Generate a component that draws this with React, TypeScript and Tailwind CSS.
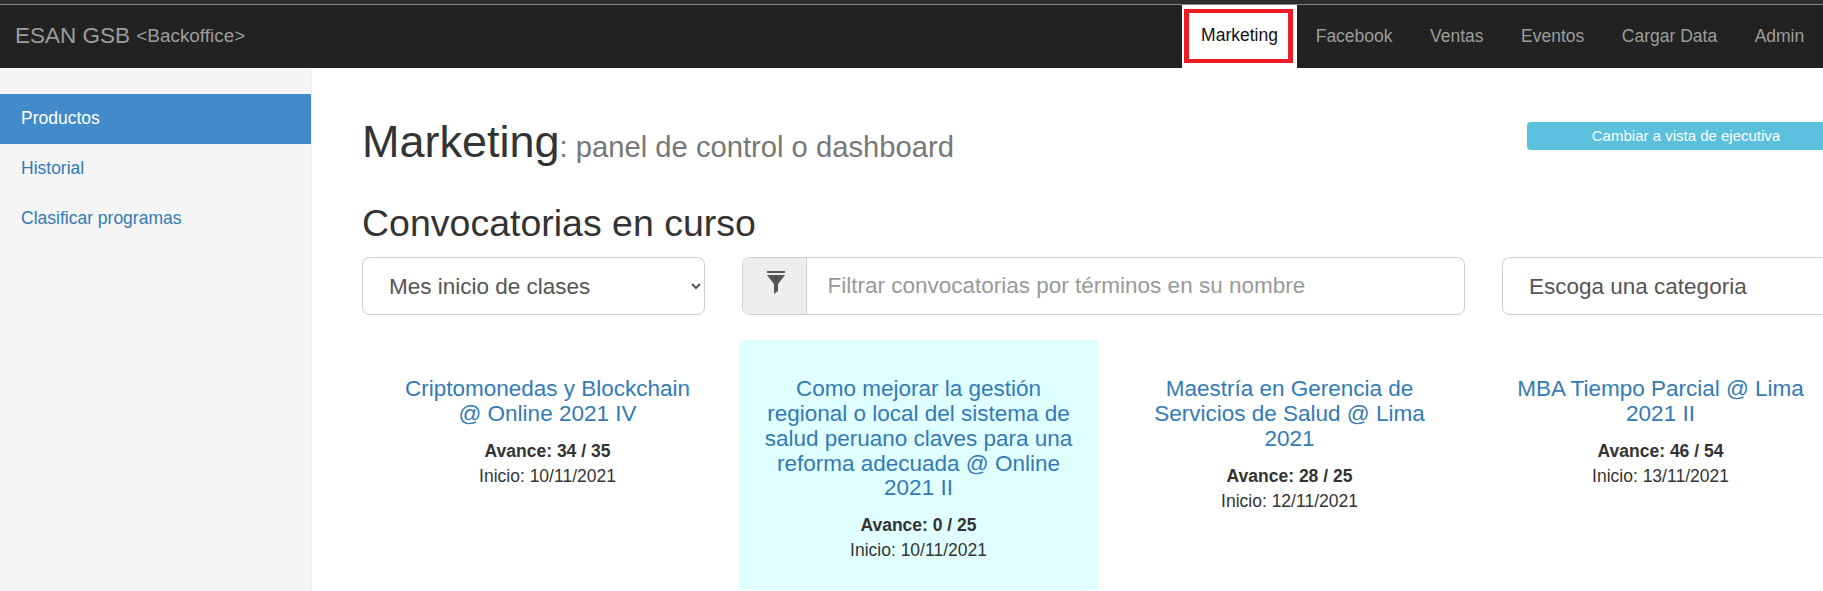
import React from 'react';

const navItems = ['Facebook', 'Ventas', 'Eventos', 'Cargar Data', 'Admin'];

const cards = [
  { title: 'Criptomonedas y Blockchain @ Online 2021 IV', avance: '34 / 35', inicio: '10/11/2021', active: false },
  {
    title: 'Como mejorar la gestión regional o local del sistema de salud peruano claves para una reforma adecuada @ Online 2021 II',
    avance: '0 / 25',
    inicio: '10/11/2021',
    active: true,
  },
  { title: 'Maestría en Gerencia de Servicios de Salud @ Lima 2021', avance: '28 / 25', inicio: '12/11/2021', active: false },
  { title: 'MBA Tiempo Parcial @ Lima 2021 II', avance: '46 / 54', inicio: '13/11/2021', active: false },
];

const App: React.FC = () => {
  return (
    <div className="h-[591px] w-full overflow-hidden bg-white font-['Liberation_Sans',Arial,sans-serif] text-[17.5px] text-[#333]">
      <div className="h-[4px] bg-[#2b2b30]"></div>
      <nav className="flex h-[64px] items-stretch justify-between border-t border-[#888] bg-[#222]">
        <a className="flex items-center pb-[1px] pl-[15px] text-[22.5px] text-[#9d9d9d]">
          ESAN GSB&nbsp;<span className="text-[18.9px]">&lt;Backoffice&gt;</span>
        </a>
        <ul className="flex items-stretch text-[#9d9d9d]">
          <li className="flex items-stretch bg-white pt-[4px] pr-[4px] pb-[5px] pl-[2px]">
            <span className="flex items-center border-x-[5px] border-y-[4px] border-[#ed1c24] pr-[10px] pb-[1px] pl-[12px] text-[#111]">Marketing</span>
          </li>
          {navItems.map((item) => (
            <li key={item} className="flex items-center px-[18.75px] pb-[1px]">
              {item}
            </li>
          ))}
        </ul>
      </nav>

      <div className="flex h-[523px]">
        <aside className="w-[312px] shrink-0 border-r border-[#eee] bg-[#f5f5f5] pt-[26px]">
          <a className="block h-[50px] bg-[#428bca] px-[21px] leading-[49px] text-white">Productos</a>
          <a className="block h-[50px] px-[21px] leading-[49px] text-[#337ab7]">Historial</a>
          <a className="block h-[50px] px-[21px] leading-[49px] text-[#337ab7]">Clasificar programas</a>
        </aside>

        <main className="w-[1533px] shrink-0 pt-[49px] pl-[50px]">
          <div className="flex items-start justify-between">
            <h1 className="text-[45px] leading-[49.5px] font-normal">
              Marketing<span className="text-[29.2px] text-[#777]">: panel de control o dashboard</span>
            </h1>
            <button className="mt-[5px] h-[28px] w-[318px] rounded-[4px] bg-[#5bc0de] text-[15px] text-white">
              Cambiar a vista de ejecutiva
            </button>
          </div>

          <h2 className="mt-[30px] text-[37.5px] leading-[41.25px] font-normal">Convocatorias en curso</h2>

          <div className="mt-[13.5px] flex h-[58px] gap-[37px] text-[22.5px] text-[#555]">
            <select className="w-[343px] shrink-0 rounded-[7.5px] border border-[#ccc] bg-white pr-[3px] pl-[22px]">
              <option>Mes inicio de clases</option>
            </select>
            <div className="flex w-[723px] shrink-0 rounded-[7.5px] border border-[#ccc]">
              <span className="flex w-[64px] shrink-0 justify-center rounded-l-[7.5px] border-r border-[#ccc] bg-[#eee] pt-[13px] pl-[2px]">
                <svg width="18" height="23" viewBox="0 0 18 23" fill="#555">
                  <path d="M0 0h18v2H0z" />
                  <path d="M0 4h18l-7 9v7l-4 3V13z" />
                </svg>
              </span>
              <input
                className="min-w-0 flex-1 bg-transparent px-[20.5px] outline-none placeholder:text-[#999]"
                placeholder="Filtrar convocatorias por términos en su nombre"
              />
            </div>
            <select className="w-[343px] shrink-0 rounded-[7.5px] border border-[#ccc] bg-white pr-[3px] pl-[22px]">
              <option>Escoga una categoria</option>
            </select>
          </div>

          <div className="mt-[25px] ml-[6px] flex gap-[12px]">
            {cards.map((card) => (
              <div
                key={card.title}
                className={`h-[250px] w-[359px] shrink-0 px-[24px] pt-[37px] text-center ${card.active ? 'bg-[#e0ffff]' : ''}`}
              >
                <a className="block text-[22.5px] leading-[24.75px] text-[#337ab7]">{card.title}</a>
                <p className="mt-[12px] leading-[25px] font-bold">Avance: {card.avance}</p>
                <p className="leading-[25px]">Inicio: {card.inicio}</p>
              </div>
            ))}
          </div>
        </main>
      </div>
    </div>
  );
};

export default App;
